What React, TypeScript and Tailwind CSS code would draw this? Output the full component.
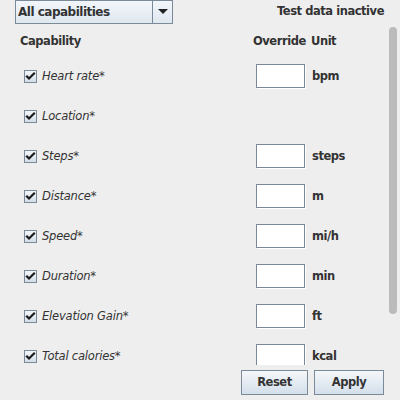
import React from "react";

const rows: { name: string; unit: string | null }[] = [
  { name: "Heart rate*", unit: "bpm" },
  { name: "Location*", unit: null },
  { name: "Steps*", unit: "steps" },
  { name: "Distance*", unit: "m" },
  { name: "Speed*", unit: "mi/h" },
  { name: "Duration*", unit: "min" },
  { name: "Elevation Gain*", unit: "ft" },
  { name: "Total calories*", unit: "kcal" },
];

function Check() {
  return (
    <div className="w-[13px] h-[13px] border border-[#7a8a99] bg-gradient-to-b from-[#f4f7fa] to-[#d4dde6] flex items-center justify-center shrink-0">
      <svg width="11" height="11" viewBox="0 0 11 11">
        <path d="M2 5.5 L4 7.5 L9 2.5" fill="none" stroke="#1a1a1a" strokeWidth="2.2" strokeLinecap="square" />
      </svg>
    </div>
  );
}

function Field() {
  return (
    <div className="w-[49px] h-[24px] border border-[#7a8a99] bg-white shadow-[1px_1px_0_#ffffff] shrink-0" />
  );
}

export default function App() {
  return (
    <div
      className="w-[400px] h-[400px] bg-[#eeeeee] text-[#333333] text-[11.5px] flex flex-col overflow-hidden"
      style={{ fontFamily: '"DejaVu Sans", sans-serif' }}
    >
      <div className="h-[24px] flex items-start justify-between pl-[15px] pr-[16px]">
        <div className="w-[158px] h-[24px] border border-[#7a8a99] flex bg-gradient-to-b from-[#f2f6fa] to-[#dfe7ef]">
          <div className="flex-1 flex items-center pl-[2px] font-bold text-[12px] tracking-[-0.5px]">All capabilities</div>
          <div className="w-[20px] border-l border-[#7a8a99] flex items-center justify-center">
            <svg width="10" height="6" viewBox="0 0 10 6">
              <path d="M0 0 H10 L5 5 Z" fill="#222" />
            </svg>
          </div>
        </div>
        <div className="font-bold tracking-[-0.45px] h-[24px] flex items-center">Test data inactive</div>
      </div>
      <div className="relative h-[341px] overflow-hidden">
        <div className="flex flex-col">
          <div className="h-[32px] pt-[4px] flex items-center font-bold tracking-[-0.45px]">
            <div className="w-[253px] pl-[20px]">Capability</div>
            <div className="w-[58px]">Override</div>
            <div>Unit</div>
          </div>
          {rows.map((r) => (
            <div key={r.name} className="h-[40px] flex items-center">
              <div className="w-[256px] pl-[24px] flex items-center gap-[5px]">
                <Check />
                <span className="italic tracking-[-0.2px] pt-[1px]">{r.name}</span>
              </div>
              {r.unit && (
                <>
                  <Field />
                  <span className="font-bold tracking-[-0.45px] ml-[7px] pt-[1px]">{r.unit}</span>
                </>
              )}
            </div>
          ))}
        </div>
        <div className="absolute left-[389px] top-[3px] w-[8px] h-[287px] rounded-[4px] bg-[#bbbbbb]" />
      </div>
      <div className="flex justify-end gap-[6px] pr-[16px] pt-[5px]">
        <button className="w-[67px] h-[25px] border border-[#7a8a99] bg-gradient-to-b from-[#f4f7fa] to-[#d4dfea] font-bold tracking-[-0.45px]">Reset</button>
        <button className="w-[70px] h-[25px] border border-[#7a8a99] bg-gradient-to-b from-[#f4f7fa] to-[#d4dfea] font-bold tracking-[-0.45px]">Apply</button>
      </div>
    </div>
  );
}
